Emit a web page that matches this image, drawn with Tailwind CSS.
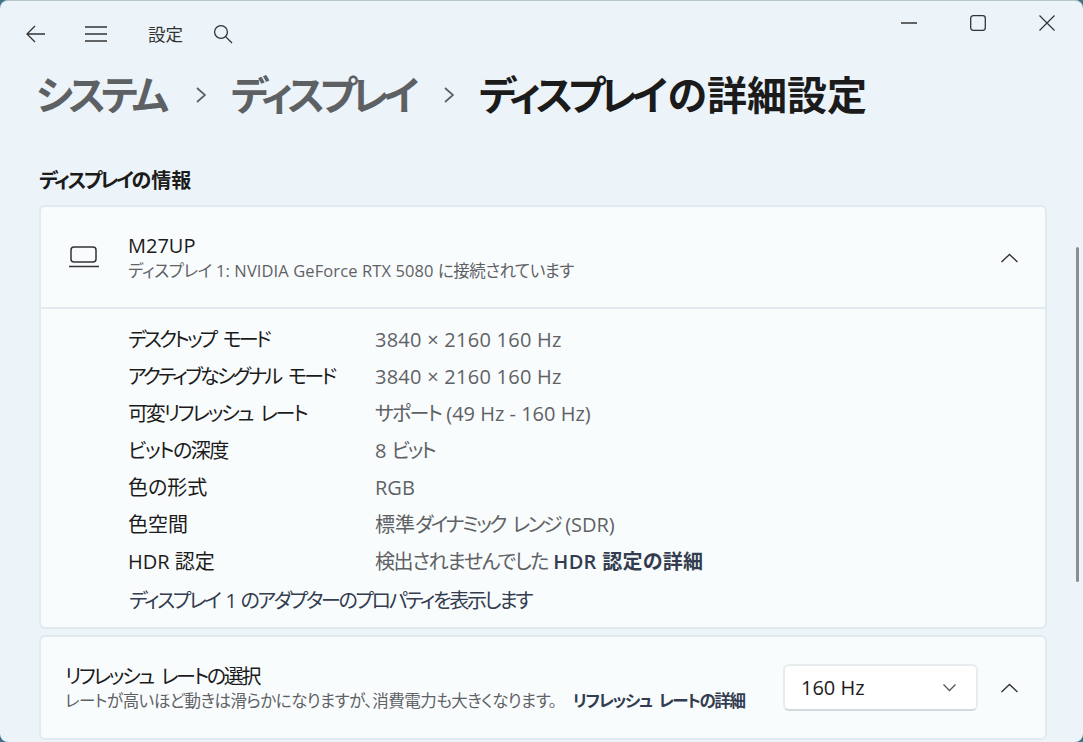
<!DOCTYPE html>
<html lang="ja">
<head>
<meta charset="utf-8">
<script src="https://cdn.jsdelivr.net/npm/@tailwindcss/browser@4"></script>
</head>
<body class="m-0 bg-[#3f7386]">
<div class="relative w-[1083px] h-[742px] overflow-hidden rounded-[8px] bg-[#ecf4fa] border-t border-[#b9c8cf] font-['Open_Sans','Noto_Sans_CJK_JP',sans-serif] text-[#1b1b1b] [font-feature-settings:'palt']">
  <!-- title bar -->
  <div class="flex items-center h-[67px] pl-[26px] pb-[1px]">
    <svg class="w-[20px] h-[20px]" viewBox="0 0 20 20" fill="none" stroke="#333" stroke-width="1.3"><path d="M1 10h18M9 2l-8 8 8 8"/></svg>
    <svg class="ml-[39px] w-[22px] h-[20px]" viewBox="0 0 22 20" fill="none" stroke="#333" stroke-width="1.3"><path d="M0 3h22M0 10h22M0 17h22"/></svg>
    <span class="ml-[41px] text-[17.500px] text-[#333]">設定</span>
    <svg class="ml-[30px] w-[20px] h-[20px]" viewBox="0 0 20 20" fill="none" stroke="#333" stroke-width="1.3"><circle cx="8" cy="8" r="6.4"/><path d="M12.6 12.6l6.4 6.4"/></svg>
  </div>
  <div class="absolute top-0 right-0 flex items-center h-[44px]">
    <svg class="w-[16px] h-[2px] mr-[53px]" viewBox="0 0 16 2"><path d="M0 1h16" stroke="#333" stroke-width="1.3"/></svg>
    <svg class="w-[16px] h-[16px] mr-[53px]" viewBox="0 0 16 16" fill="none" stroke="#333" stroke-width="1.3"><rect x=".7" y=".7" width="14.6" height="14.6" rx="2.5"/></svg>
    <svg class="w-[16px] h-[16px] mr-[28px]" viewBox="0 0 16 16" fill="none" stroke="#333" stroke-width="1.2"><path d="M.5.5l15 15M15.500.5l-15 15"/></svg>
  </div>
  <!-- breadcrumb -->
  <div class="flex items-center h-[54px] pl-[36px] text-[40px] font-semibold leading-none">
    <span class="text-[#5e6163] w-[132px] whitespace-nowrap tracking-[-4.800px]">システム</span>
    <svg class="ml-[28px] w-[10px] h-[18px]" viewBox="0 0 10 18" fill="none" stroke="#5e6163" stroke-width="1.8"><path d="M1 2l8 7-8 7"/></svg>
    <span class="ml-[25px] text-[#5e6163] w-[186px] whitespace-nowrap tracking-[-5.300px]">ディスプレイ</span>
    <svg class="ml-[27px] w-[10px] h-[18px]" viewBox="0 0 10 18" fill="none" stroke="#5e6163" stroke-width="1.8"><path d="M1 2l8 7-8 7"/></svg>
    <span class="ml-[25px] text-[#1b1b1b] whitespace-nowrap"><span class="tracking-[-5.200px]">ディスプレイ</span><span class="ml-[5px]">の詳細設定</span></span>
  </div>
  <div class="mt-[46px] ml-[39px] h-[26px] text-[20px] font-semibold leading-[26px]"><span class="tracking-[-2.500px]">ディスプレイ</span>の情報</div>
  <!-- card 1 -->
  <div class="mt-[11px] ml-[39px] w-[1008px] h-[424px] rounded-[6px] border-2 border-[#e2eaef] bg-[#f9fcfd] flex flex-col">
    <div class="flex items-center h-[102px] border-b-2 border-[#e2eaef] pl-[28px] pr-[27px] shrink-0">
      <svg class="w-[30px] h-[22px]" viewBox="0 0 30 22" fill="none" stroke="#333" stroke-width="1.5"><rect x="2" y="1" width="25" height="15" rx="3"/><path d="M0 20.500h30"/></svg>
      <div class="ml-[29px] grow">
        <div class="text-[20px] leading-[26px] text-[#1b1b1b]">M27UP</div>
        <div class="text-[16.500px] leading-[23px] text-[#5f6265] whitespace-nowrap"><span class="tracking-[-0.400px]">ディスプレイ</span> <span class="tracking-[0.100px]">1: NVIDIA GeForce RTX 5080</span> <span class="tracking-[-0.500px]">に接続されています</span></div>
      </div>
      <svg class="w-[17px] h-[10px] relative top-[1px]" viewBox="0 0 17 10" fill="none" stroke="#333" stroke-width="1.4"><path d="M.5 9L8.500 1.500 16.500 9"/></svg>
    </div>
    <div class="pl-[87px] pt-[12px] text-[20px] leading-[37px] whitespace-nowrap">
      <div class="grid grid-cols-[247px_1fr]">
        <span class="tracking-[-2.800px] [word-spacing:5px]">デスクトップ モード</span><span class="text-[#5f6265] tracking-[0.250px]">3840 × 2160 160 Hz</span>
        <span class="tracking-[-2.700px] [word-spacing:5px]">アクティブなシグナル モード</span><span class="text-[#5f6265] tracking-[0.250px]">3840 × 2160 160 Hz</span>
        <span class="tracking-[-2.200px] [word-spacing:5px]">可変リフレッシュ レート</span><span class="text-[#5f6265]"><span class="tracking-[-1.800px]">サポート</span> (49 Hz - 160 Hz)</span>
        <span class="tracking-[-1.500px]">ビットの深度</span><span class="text-[#5f6265]">8 <span class="tracking-[-2.200px]">ビット</span></span>
        <span>色の形式</span><span class="text-[#5f6265]">RGB</span>
        <span>色空間</span><span class="text-[#5f6265]">標準<span class="tracking-[-2.500px] [word-spacing:5px]">ダイナミック レンジ</span> (SDR)</span>
        <span>HDR 認定</span><span class="text-[#5f6265]"><span class="tracking-[-1.400px]">検出されませんでした</span> <span class="font-semibold text-[#333d4f] tracking-[0.300px]">HDR 認定の詳細</span></span>
      </div>
      <div class="mt-[2px] ml-[1px] text-[#333d4f] tracking-[-2.300px] [word-spacing:3px]">ディスプレイ 1 のアダプターのプロパティを表示します</div>
    </div>
  </div>
  <!-- card 2 -->
  <div class="mt-[6px] ml-[39px] w-[1008px] h-[105px] rounded-[6px] border-2 border-[#e2eaef] bg-[#f9fcfd] flex items-center pl-[24px] pr-[27px]">
    <div class="grow whitespace-nowrap">
      <div class="text-[20px] leading-[26px] tracking-[-2.300px] [word-spacing:5px] relative top-[2px]">リフレッシュ レートの選択</div>
      <div class="text-[16.500px] leading-[25px] text-[#5f6265]"><span class="tracking-[-0.500px]">レートが高いほど動きは滑らかになりますが、消費電力も大きくなります。</span> <span class="ml-[12px] font-semibold text-[#333d4f] tracking-[-1.400px] [word-spacing:4px]">リフレッシュ レートの詳細</span></div>
    </div>
    <div class="mr-[23px] flex items-center w-[195px] h-[47px] rounded-[6px] border-2 border-[#e8ecee] border-b-[#d5d9db] bg-white pl-[16px] pr-[20px] shrink-0">
      <span class="grow text-[20px]">160 Hz</span>
      <svg class="w-[13px] h-[8px]" viewBox="0 0 13 8" fill="none" stroke="#555" stroke-width="1.3"><path d="M.5.500l6 6 6-6"/></svg>
    </div>
    <svg class="w-[17px] h-[10px] shrink-0" viewBox="0 0 17 10" fill="none" stroke="#333" stroke-width="1.4"><path d="M.5 9L8.500 1.500 16.500 9"/></svg>
  </div>
  <!-- scrollbar -->
  <div class="absolute left-[1076px] top-[246px] w-[3px] h-[335px] rounded-full bg-[#8b8f92]"></div>
</div>
</body>
</html>
